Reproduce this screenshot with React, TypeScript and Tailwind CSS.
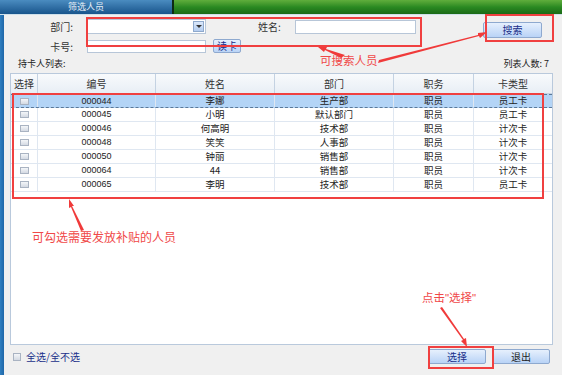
import React from "react";

const rows = [
  ["000044", "李娜", "生产部", "职员", "员工卡"],
  ["000045", "小明", "默认部门", "职员", "员工卡"],
  ["000046", "何高明", "技术部", "职员", "计次卡"],
  ["000048", "笑笑", "人事部", "职员", "计次卡"],
  ["000050", "钟丽", "销售部", "职员", "计次卡"],
  ["000064", "44", "销售部", "职员", "计次卡"],
  ["000065", "李明", "技术部", "职员", "员工卡"],
];

const font = { fontFamily: '"Noto Sans CJK SC", "Noto Sans", sans-serif' };

function Check() {
  return (
    <div className="w-[9px] h-[7px] border border-[#a9b3c2] bg-gradient-to-b from-[#f4f6f9] to-[#d4dae3]" />
  );
}

function Btn({ children, className = "" }: { children: React.ReactNode; className?: string }) {
  return (
    <div
      className={
        "flex items-center justify-center rounded-[2px] border border-[#8ea9cf] bg-gradient-to-b from-[#e6f0fd] to-[#b9d3f6] text-[10px] text-[#1a2f8a] leading-none " +
        className
      }
    >
      {children}
    </div>
  );
}

export default function App() {
  return (
    <div className="relative w-[562px] h-[375px] overflow-hidden bg-[#f0f0f0] text-[#222]" style={font}>
      {/* top bar */}
      <div className="flex h-[14px]">
        <div className="w-[172px] bg-gradient-to-b from-[#4a8cc0] to-[#18558c] text-[#e8f0f8] text-[9px] leading-[14px] text-center">
          筛选人员
        </div>
        <div className="w-[2px] bg-[#0d2a14]" />
        <div className="flex-1 bg-gradient-to-b from-[#5fae3c] via-[#2a8a22] to-[#1b6a16]" />
      </div>
      <div className="h-[1px] bg-[#cfe0ea]" />
      <div className="flex h-[360px]">
        <div className="w-[4px] bg-gradient-to-r from-[#2f7fc0] to-[#1f67a8]" />
        <div className="flex-1 flex flex-col">
          {/* form */}
          <div className="flex pt-[4px] h-[40px]">
            <div className="flex flex-col gap-[5px]">
              <div className="flex items-center h-[15px]">
                <div className="w-[69px] text-right text-[10px] text-[#333]">部门:</div>
                <div className="ml-[14px] w-[119px] h-[15px] bg-white border border-[#b7c6d8] flex justify-end items-center pr-[1px]">
                  <div className="w-[11px] h-[11px] bg-gradient-to-b from-[#dbe8fb] to-[#b4cdf0] border border-[#8fa9cc] flex items-center justify-center">
                    <div className="w-0 h-0 border-l-[3px] border-r-[3px] border-t-[3px] border-l-transparent border-r-transparent border-t-[#333]" />
                  </div>
                </div>
                <div className="ml-[52px] w-[36px] text-[10px] text-[#333]">姓名:</div>
                <div className="ml-[1px] w-[121px] h-[14px] bg-white border border-[#b7c6d8]" />
              </div>
              <div className="flex items-center h-[14px]">
                <div className="w-[69px] text-right text-[10px] text-[#333]">卡号:</div>
                <div className="ml-[14px] w-[119px] h-[13px] bg-white border border-[#b7c6d8]" />
                <Btn className="ml-[7px] w-[28px] h-[14px]">读卡</Btn>
              </div>
            </div>
            <Btn className="ml-[67px] mt-[3px] w-[59px] h-[16px]">搜索</Btn>
          </div>
          {/* list header */}
          <div className="flex items-center h-[18px] pl-[14px] pr-[13px] text-[9px] text-[#222]">
            <span>持卡人列表:</span>
            <span className="ml-auto">列表人数: 7</span>
          </div>
          {/* table */}
          <div className="ml-[6px] w-[543px] h-[272px] bg-white border border-[#b9c9dc]">
            <div className="grid grid-cols-[27px_118px_119px_119px_80px_78px] h-[20px] bg-gradient-to-b from-[#f8fafc] to-[#e8eef5] border-b border-[#c4d2e2] text-[10px] text-[#333]">
              {["选择", "编号", "姓名", "部门", "职务", "卡类型"].map((h, i) => (
                <div
                  key={h}
                  className={
                    "flex items-center justify-center " + (i < 5 ? "border-r border-[#c4d2e2]" : "")
                  }
                >
                  {h}
                </div>
              ))}
            </div>
            {rows.map((r, ri) => (
              <div
                key={r[0]}
                className={
                  "grid grid-cols-[27px_118px_119px_119px_80px_78px] h-[14px] text-[9.5px] " +
                  (ri === 0
                    ? "bg-[#b3d4f6] border-y border-dashed border-y-[#5a7898]"
                    : "border-b border-[#dfe7f1]")
                }
              >
                <div className="flex items-center justify-center border-r border-[#dfe7f1]">
                  <Check />
                </div>
                {r.map((c, ci) => (
                  <div
                    key={ci}
                    className={
                      "flex items-center justify-center leading-none " +
                      (ci < 4 ? "border-r border-[#dfe7f1]" : "") +
                      (ci === 0 ? " font-['Liberation_Sans'] text-[9px]" : "")
                    }
                  >
                    {c}
                  </div>
                ))}
              </div>
            ))}
          </div>
          {/* footer */}
          <div className="flex items-start pt-[4px]">
            <div className="flex items-center ml-[9px] mt-[3px]">
              <div className="w-[8px] h-[8px] border border-[#a9b3c2] bg-gradient-to-b from-[#f4f6f9] to-[#d4dae3]" />
              <span className="ml-[5px] text-[10px] text-[#1a2f8a] leading-none">全选/全不选</span>
            </div>
            <Btn className="ml-[348px] w-[58px] h-[15px]">选择</Btn>
            <Btn className="ml-[6px] w-[58px] h-[15px] text-[#222]">退出</Btn>
          </div>
        </div>
      </div>

      {/* annotations */}
      <div className="absolute left-[86px] top-[17px] w-[336px] h-[30px] border-2 border-[#f04040]" />
      <div className="absolute left-[485px] top-[14px] w-[69px] h-[28px] border-2 border-[#f04040]" />
      <div className="absolute left-[12px] top-[93px] w-[532px] h-[106px] border-2 border-[#f04040]" />
      <div className="absolute left-[428px] top-[346px] w-[66px] h-[23px] border-2 border-[#f04040]" />
      <span className="absolute left-[320px] top-[55px] text-[11.5px] leading-none text-[#f04848]">可搜索人员</span>
      <span className="absolute left-[32px] top-[231px] text-[12px] leading-none text-[#f04848]">可勾选需要发放补贴的人员</span>
      <span className="absolute left-[422px] top-[292px] text-[11.5px] leading-none text-[#f04848]">
        点击<span className="font-['Liberation_Sans']">"</span>选择<span className="font-['Liberation_Sans']">"</span>
      </span>
      <svg className="absolute inset-0 pointer-events-none" width="562" height="375">
        <g fill="#f03a3a" stroke="none">
          <polygon points="345,55 341,58 325,50 324,52 318,47 327,47 326,49" />
          <polygon points="378,63 379,60 478,35 478,33 487,32 480,38 479,36" />
          <polygon points="84,230 81,231 71,207 69,208 69,199 74,206 72,206" />
          <polygon points="440,308 442,307 464,339 466,338 467,347 461,341 463,340" />
        </g>
      </svg>
    </div>
  );
}
